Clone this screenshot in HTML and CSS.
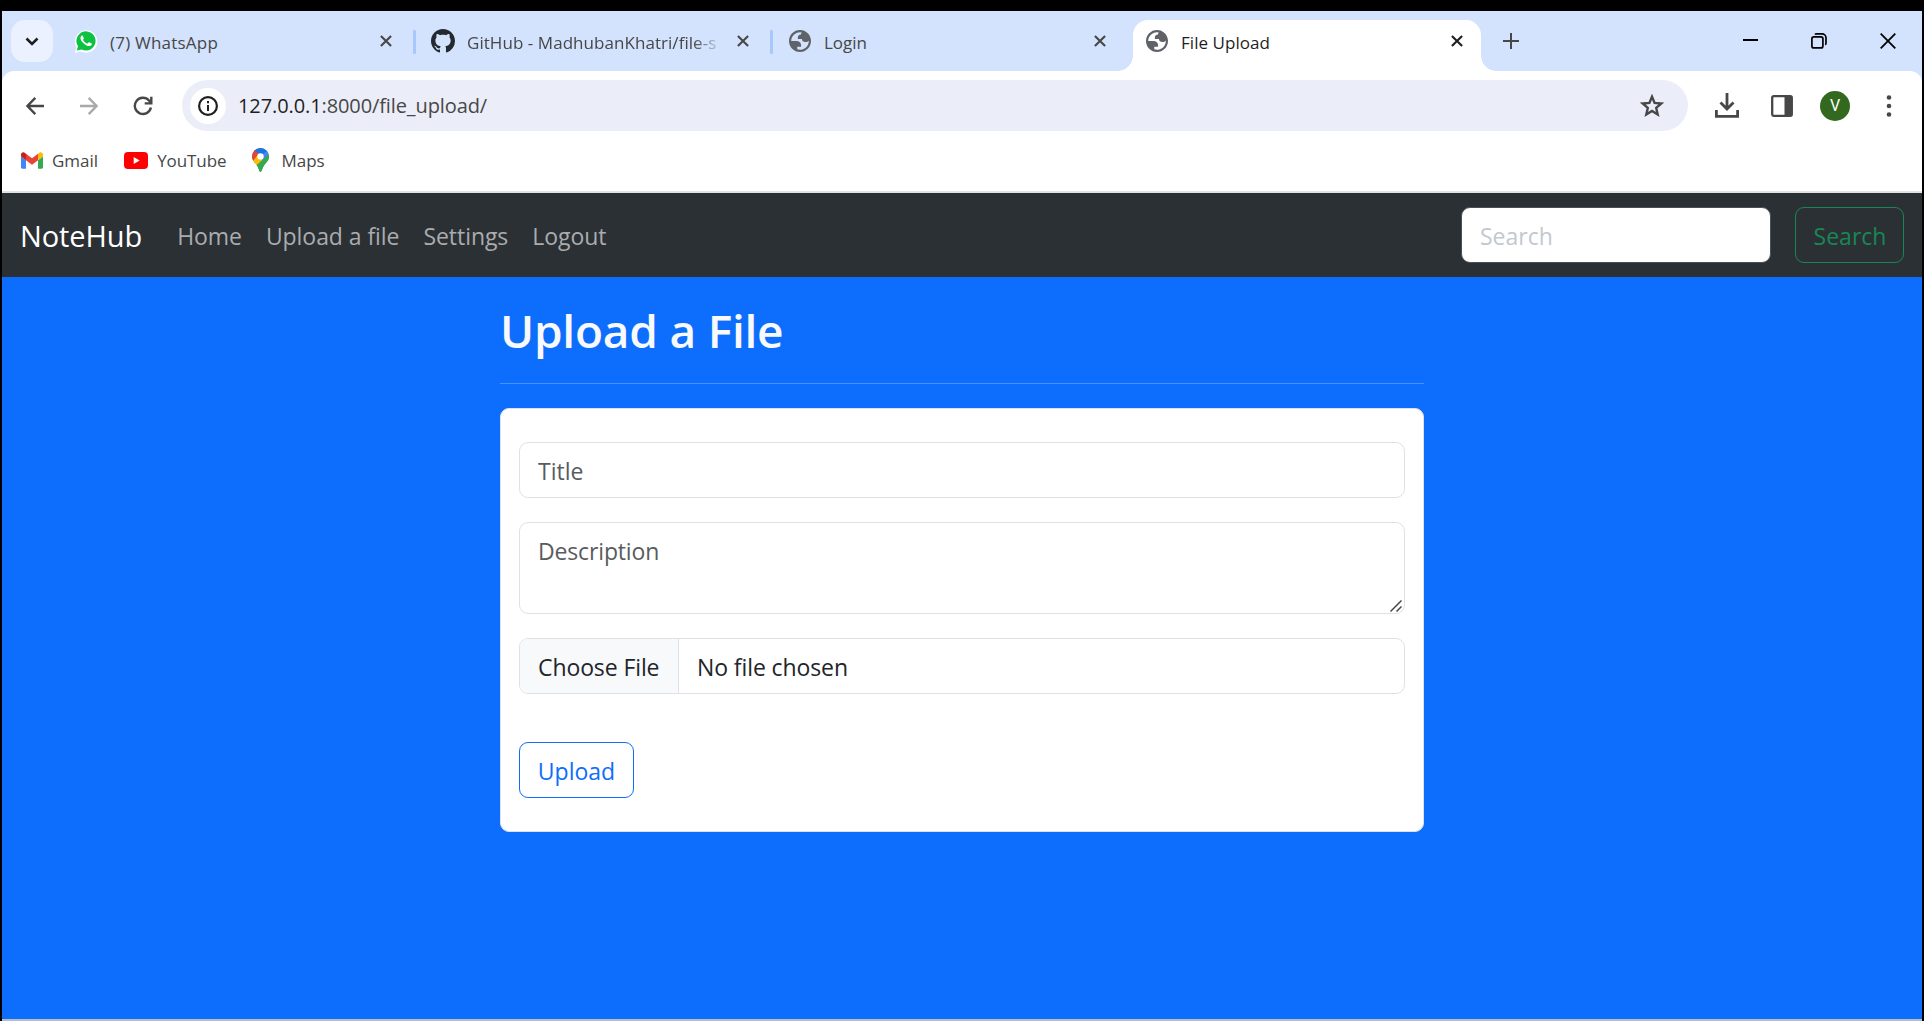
FILE: index.html
```html
<!DOCTYPE html>
<html lang="en">
<head>
<meta charset="utf-8">
<title>File Upload</title>
<link rel="stylesheet" href="styles.css">
</head>
<body>
<svg class="defs" width="0" height="0" aria-hidden="true">
  <symbol id="close" viewBox="0 0 12 12"><path d="M.9.9 11.1 11.1M11.1.9.9 11.1" fill="none" stroke="currentColor" stroke-width="2.1"/></symbol>
  <symbol id="globe" viewBox="2 2 20 20"><path fill="#5f6368" fill-rule="evenodd" d="M12 2C6.480 2 2 6.480 2 12s4.480 10 10 10 10-4.480 10-10S17.520 2 12 2zM4 12h4.400c3.407.022 4.922 1.730 4.543 5.127H9.488v2.470a8.004 8.004 0 0 0 10.498-8.083C19.327 12.504 18.332 13 17 13c-2.137 0-3.206-.916-3.206-2.750h-3.748c-.274-2.728.683-4.092 2.870-4.092 0-.975.327-1.597.811-1.970A8.004 8.004 0 0 0 4 12z"/></symbol>
</svg>
<div class="window">
  <header class="tabstrip">
    <button class="tab-search"><svg width="14" height="9" viewBox="0 0 14 9"><path d="M1.500 1.500 7 7l5.500-5.500" fill="none" stroke="#1f1f1f" stroke-width="2.600"/></svg></button>
    <div class="tab tab-first">
      <svg class="favicon" width="24" height="24" viewBox="0 0 24 24"><path fill="#fff" d="M1 24 2.400 18A11.200 11.200 0 1 1 7 22.400z"/><path fill="#0dc143" d="M2.800 21.500 4 17.300A9.600 9.600 0 1 1 7.600 20.500z"/><path fill="#fff" d="M8.700 6.800c-.3-.5-.8-.5-1.200-.1-1.900 1.800-.8 4.600 1.500 7 2.600 2.700 5.900 4.300 8 2.800.9-.7 1-1.700.6-2l-2.300-1.200c-.6-.2-.8.1-1.400 1-.3.400-.7.300-1.300 0-1.500-.7-2.700-1.900-3.500-3.300-.3-.6.900-1 .7-1.800z"/></svg>
      <span class="tab-title t-wa">(7) WhatsApp</span>
      <svg class="tab-close" width="12" height="12"><use href="#close"/></svg>
    </div>
    <i class="tab-sep"></i>
    <div class="tab tab-github">
      <svg class="favicon" width="24" height="24" viewBox="0 0 16 16"><path fill="#24292f" d="M8 0C3.580 0 0 3.580 0 8c0 3.540 2.290 6.530 5.470 7.590.4.070.55-.17.55-.38 0-.19-.01-.82-.01-1.490-2.010.37-2.530-.49-2.690-.94-.09-.23-.48-.94-.82-1.130-.28-.15-.68-.52-.01-.53.63-.01 1.080.58 1.230.82.72 1.210 1.870.87 2.330.66.07-.52.28-.87.51-1.070-1.780-.2-3.640-.89-3.640-3.950 0-.87.31-1.590.82-2.150-.08-.2-.36-1.020.08-2.120 0 0 .67-.21 2.200.82.64-.18 1.320-.27 2-.27s1.360.09 2 .27c1.530-1.040 2.200-.82 2.200-.82.44 1.100.16 1.920.08 2.120.51.56.82 1.270.82 2.150 0 3.070-1.870 3.750-3.650 3.950.29.25.54.73.54 1.480 0 1.070-.01 1.930-.01 2.200 0 .21.15.46.55.38A8.010 8.010 0 0 0 16 8c0-4.420-3.580-8-8-8z"/></svg>
      <span class="tab-title t-gh">GitHub - MadhubanKhatri/file-s</span>
      <svg class="tab-close" width="12" height="12"><use href="#close"/></svg>
    </div>
    <i class="tab-sep"></i>
    <div class="tab">
      <svg class="favicon" width="22" height="22"><use href="#globe"/></svg>
      <span class="tab-title t-login">Login</span>
      <svg class="tab-close" width="12" height="12"><use href="#close"/></svg>
    </div>
    <div class="tab tab-active">
      <svg class="favicon" width="22" height="22"><use href="#globe"/></svg>
      <span class="tab-title t-file">File Upload</span>
      <svg class="tab-close" width="12" height="12"><use href="#close"/></svg>
    </div>
    <svg class="new-tab" width="16" height="16" viewBox="0 0 16 16"><path d="M8 0v16M0 8h16" stroke="#474747" stroke-width="2"/></svg>
    <div class="window-buttons">
      <svg width="15" height="15" viewBox="0 0 15 15"><path d="M0 7h15" stroke="#000" stroke-width="2"/></svg>
      <svg width="16" height="16" viewBox="0 0 16 16" fill="none" stroke="#000" stroke-width="1.700"><rect x=".9" y="3.900" width="11" height="11" rx="2"/><path d="M3.900 1.500Q4.500.9 5.500.9h5.500a4 4 0 0 1 4 4V10q0 1.300-.8 1.800"/></svg>
      <svg width="16" height="16" viewBox="0 0 16 16"><path d="m.7.700 14.600 14.600M15.300.7.700 15.300" stroke="#000" stroke-width="1.800"/></svg>
    </div>
  </header>

  <div class="chrome">
    <div class="toolbar">
      <svg class="nav-icon" width="18" height="18" viewBox="0 0 18 18" fill="none" stroke="#474747" stroke-width="2.400"><path d="M18 9H2M9.300.9 1.400 9l7.900 8.100"/></svg>
      <svg class="nav-icon" width="18" height="18" viewBox="0 0 18 18" fill="none" stroke="#a9a9a9" stroke-width="2.400"><path d="M0 9h16M8.700.9 16.600 9l-7.900 8.100"/></svg>
      <svg class="nav-icon" width="20" height="20" viewBox="0 0 20 20" fill="none" stroke="#474747" stroke-width="2.400"><path d="M17.900 11.500A8.100 8.100 0 1 1 16 4.500l2 2.200M18.300.8v6.600h-6.600"/></svg>
      <div class="omnibox">
        <span class="site-info"><svg width="20" height="20" viewBox="0 0 20 20"><circle cx="10" cy="10" r="8.900" fill="none" stroke="#1f1f1f" stroke-width="2.200"/><path d="M10 9v6M10 5v2.200" stroke="#1f1f1f" stroke-width="2"/></svg></span>
        <span class="url"><b>127.0.0.1</b>:8000/file_upload/</span>
        <svg class="star" width="24" height="24" viewBox="0 0 24 24"><path d="m12 2.700 2.600 6.200 6.700.6-5.100 4.400 1.500 6.500L12 16.900l-5.700 3.500 1.500-6.500-5.100-4.400 6.700-.6z" fill="none" stroke="#474747" stroke-width="2.400"/></svg>
      </div>
      <svg class="download" width="24" height="25" viewBox="0 0 24 25" fill="none" stroke="#474747" stroke-width="2.800"><path d="M12 0v15.500M5.500 9.500 12 16l6.500-6.500M1.400 17v6.300h21.200V17"/></svg>
      <svg class="side-panel" width="22" height="22" viewBox="0 0 22 22"><rect x="1.200" y="1.200" width="19.600" height="19.600" rx="1.500" fill="none" stroke="#474747" stroke-width="2.300"/><path d="M13.500 1H20v20h-6.500z" fill="#474747"/></svg>
      <span class="avatar">V</span>
      <svg class="menu" width="6" height="22" viewBox="0 0 6 22" fill="#474747"><circle cx="3" cy="2.500" r="2.300"/><circle cx="3" cy="11" r="2.300"/><circle cx="3" cy="19.500" r="2.300"/></svg>
    </div>
    <nav class="bookmarks">
      <a class="bookmark"><svg width="22" height="17" viewBox="52 42 88 66"><path fill="#4285f4" d="M58 108h14V74L52 59v43c0 3.320 2.690 6 6 6"/><path fill="#34a853" d="M120 108h14c3.320 0 6-2.690 6-6V59l-20 15"/><path fill="#fbbc04" d="M120 48v26l20-15v-8c0-7.420-8.470-11.650-14.400-7.200"/><path fill="#ea4335" d="M72 74V48l24 18 24-18v26L96 92"/><path fill="#c5221f" d="M52 51v8l20 15V48l-5.600-4.200c-5.940-4.450-14.400-.22-14.400 7.200"/></svg><span>Gmail</span></a>
      <a class="bookmark"><svg width="24" height="17" viewBox="0 0 24 17"><rect width="24" height="17" rx="4" fill="#f00"/><path d="m9.700 5 6 3.500-6 3.500z" fill="#fff"/></svg><span class="b-yt">YouTube</span></a>
      <a class="bookmark bookmark-maps"><svg width="17" height="24" viewBox="0 0 17 24"><clipPath id="pin"><path d="M8.500 0A8.400 8.400 0 0 0 0 8.400c0 3.500 2.300 5.500 4.500 8.300C6.800 19.700 7.300 24 8.500 24s1.700-4.300 4-7.300c2.200-2.800 4.500-4.800 4.500-8.300A8.400 8.400 0 0 0 8.500 0z"/></clipPath><g clip-path="url(#pin)"><path fill="#34a853" d="M0 0h17v24H0z"/><path fill="#fbbc04" d="M0 13 8.500 3l4 8.500L3 22z"/><path fill="#ea4335" d="M0 0h4l4 4-7 9H0z"/><path fill="#1a73e8" d="M2 2.200 6 0h6l4 4-5 3-4.300-1.400z"/><path fill="#4285f4" d="m11 6 5-4 1 5-7.300 7.500z"/><path fill="#34a853" d="M17 6v18H5.500l-1-6.700z"/></g><circle cx="8.500" cy="8.400" r="3.200" fill="#fff"/></svg><span>Maps</span></a>
    </nav>
  </div>

  <nav class="navbar">
    <a class="brand">NoteHub</a>
    <a class="nav-link">Home</a>
    <a class="nav-link">Upload a file</a>
    <a class="nav-link">Settings</a>
    <a class="nav-link">Logout</a>
    <form class="search">
      <input class="search-input" type="text" placeholder="Search">
      <button class="btn btn-success" type="button">Search</button>
    </form>
  </nav>

  <main class="page">
    <section class="container">
      <h1>Upload a File</h1>
      <hr>
      <form class="card">
        <input class="control" type="text" placeholder="Title">
        <div class="area-wrap">
          <textarea class="control area" placeholder="Description"></textarea>
          <svg class="grip" width="12" height="12" viewBox="0 0 12 12"><path d="M.5 11.500 11.500.5M6.500 11.500l5-5" stroke="#474747" stroke-width="1.500"/></svg>
        </div>
        <div class="control file"><span class="file-button">Choose File</span><span class="file-name">No file chosen</span></div>
        <button class="btn btn-primary" type="button">Upload</button>
      </form>
    </section>
  </main>
</div>
</body>
</html>
```
FILE: styles.css
```css
* { box-sizing: border-box; }
body {
  margin: 0;
  height: 1021px;
  padding: 11px 2px 0;
  background: #000;
  font-family: "Open Sans", "Noto Sans", sans-serif;
  overflow: hidden;
}
.defs { position: absolute; }
svg { flex: none; display: block; }
.window {
  height: 1010px;
  display: flex;
  flex-direction: column;
  background: #fff;
  border-bottom: 2px solid #b4bcc8;
}

/* Tab strip */
.tabstrip {
  height: 60px;
  flex: none;
  display: flex;
  align-items: flex-start;
  padding: 9px 26px 0 9px;
  background: #d3e2fd;
}
.tab-search {
  width: 42px;
  height: 42px;
  padding: 0;
  border: 0;
  border-radius: 14px;
  background: #ebf1fe;
  display: flex;
  align-items: center;
  justify-content: center;
}
.tab {
  width: 348px;
  height: 51px;
  padding: 0 18px 9px 12px;
  display: flex;
  align-items: center;
  color: #474747;
}
.tab .favicon { margin-right: 13px; }
.tab-first { margin-left: 9px; }
.tab-first .favicon { margin-right: 12px; }
.tab-github .favicon { margin-right: 12px; }
.tab:nth-of-type(n+3) { padding-left: 13px; }
.tab-title {
  flex: 1;
  margin-right: 19px;
  font-size: 17px;
  line-height: 26px;
  padding-top: 3px;
  white-space: nowrap;
  overflow: hidden;
}
.t-wa { letter-spacing: .22px; }
.t-file { letter-spacing: .05px; }
.t-gh {
  letter-spacing: .05px;
  -webkit-mask-image: linear-gradient(to right, #000 90%, transparent 102%);
  mask-image: linear-gradient(to right, #000 90%, transparent 102%);
}
.tab-sep {
  width: 3px;
  height: 24px;
  margin: 10px 3px 0;
  border-radius: 1px;
  background: #a8c7fa;
}
.tab-active {
  position: relative;
  margin-left: 9px;
  background: #fff;
  border-radius: 15px 15px 0 0;
  color: #1f1f1f;
}
.tab-active::before,
.tab-active::after {
  content: "";
  position: absolute;
  bottom: 0;
  width: 15px;
  height: 15px;
}
.tab-active::before {
  left: -15px;
  background: radial-gradient(circle at 0 0, transparent 14.500px, #fff 15px);
}
.tab-active::after {
  right: -15px;
  background: radial-gradient(circle at 100% 0, transparent 14.500px, #fff 15px);
}
.new-tab { margin: 13px 0 0 22px; }
.window-buttons {
  margin-left: auto;
  padding-top: 13px;
  display: flex;
  gap: 53px;
}

/* Toolbar and bookmarks */
.chrome {
  height: 122px;
  flex: none;
  background: linear-gradient(#d3e2fd 0 20px, #fff 20px);
}
.toolbar {
  height: 69px;
  display: flex;
  align-items: center;
  padding: 0 30px 0 24px;
  background: #fff;
  border-radius: 12px 12px 0 0;
}
.nav-icon { margin-right: 36px; }
.nav-icon + .nav-icon { margin-right: 35px; }
.nav-icon + .nav-icon + .nav-icon { margin-right: 29px; }
.omnibox {
  width: 1506px;
  height: 51px;
  padding: 0 24px 0 8px;
  display: flex;
  align-items: center;
  border-radius: 26px;
  background: #ebeef8;
}
.site-info {
  width: 36px;
  height: 36px;
  border-radius: 50%;
  background: #fff;
  display: flex;
  align-items: center;
  justify-content: center;
}
.url {
  flex: 1;
  margin-left: 12px;
  font-size: 20px;
  letter-spacing: -.1px;
  color: #474747;
}
.url b { font-weight: 400; color: #1f1f1f; }
.download { margin-left: 27px; }
.side-panel { margin-left: 32px; }
.avatar {
  width: 30px;
  height: 30px;
  margin-left: 27px;
  border-radius: 50%;
  background: #33691e;
  color: #fff;
  font: 400 16px/30px Roboto, sans-serif;
  text-align: center;
}
.menu { margin-left: 36px; }
.bookmarks {
  height: 51px;
  display: flex;
  align-items: flex-start;
  gap: 26px;
  padding: 7px 19px 0;
}
.bookmark {
  height: 26px;
  display: flex;
  align-items: center;
  gap: 9px;
  font-size: 17px;
  color: #474747;
}
.bookmark-maps { gap: 12px; }
.b-yt { letter-spacing: -.08px; }
.chrome::after {
  content: "";
  display: block;
  height: 2px;
  background: #dfe5e0;
}

/* Site navigation */
.navbar {
  height: 84px;
  flex: none;
  display: flex;
  align-items: center;
  padding: 0 18px;
  background: #2b3035;
  font-size: 23px;
  letter-spacing: -.06px;
  color: #aaacae;
}
.brand { font-size: 29px; color: #fff; margin-right: 35px; padding-top: 1px; letter-spacing: -.1px; }
.nav-link { margin-right: 24px; padding-top: 2px; }
.search { margin-left: auto; display: flex; gap: 24px; }
input, textarea, button { font: inherit; outline: 0; }
.search-input {
  width: 310px;
  height: 56px;
  padding: 2px 18px 0;
  border: 1px solid #495057;
  border-radius: 9px;
  background: #fff;
}
.search-input::placeholder { color: #c3c8ce; opacity: 1; }
.btn {
  height: 56px;
  padding: 2px 0 0;
  border: 1px solid;
  border-radius: 9px;
  background: transparent;
  text-align: center;
}
.btn-success { width: 109px; padding-left: 1px; color: #198754; }
.btn-primary { width: 115px; color: #0d6efd; }

/* Upload page */
.page { flex: 1; background: #0d6efd; }
.container { width: 924px; margin: 0 auto; padding-top: 24px; }
h1 {
  margin: 0;
  padding-top: 1px;
  font-size: 46px;
  font-weight: 600;
  line-height: 57px;
  letter-spacing: -.22px;
  color: #f8f9fa;
}
hr {
  height: 1px;
  margin: 24px 0;
  border: 0;
  background: #4891fe;
}
.card {
  height: 424px;
  padding: 33px 18px;
  border: 1px solid #dee2e6;
  border-radius: 9px;
  background: #fff;
  font-size: 23px;
  letter-spacing: -.05px;
  color: #212529;
}
.control {
  display: block;
  width: 100%;
  height: 56px;
  margin: 0 0 24px;
  padding: 2px 18px 0;
  border: 1px solid #dee2e6;
  border-radius: 9px;
  background: #fff;
  color: #212529;
}
.control::placeholder { color: #595c5f; opacity: 1; }
.area-wrap { position: relative; }
.area { height: 92px; padding: 10px 18px; resize: none; line-height: 36px; letter-spacing: -.15px; }
.grip { position: absolute; right: 3px; bottom: 2px; }
.file { display: flex; padding: 0; overflow: hidden; margin-bottom: 48px; line-height: 56px; letter-spacing: -.1px; }
.file-button {
  width: 159px;
  padding-left: 18px;
  border-right: 1px solid #dee2e6;
  background: #f8f9fa;
}
.file-name { padding-left: 18px; }
```
